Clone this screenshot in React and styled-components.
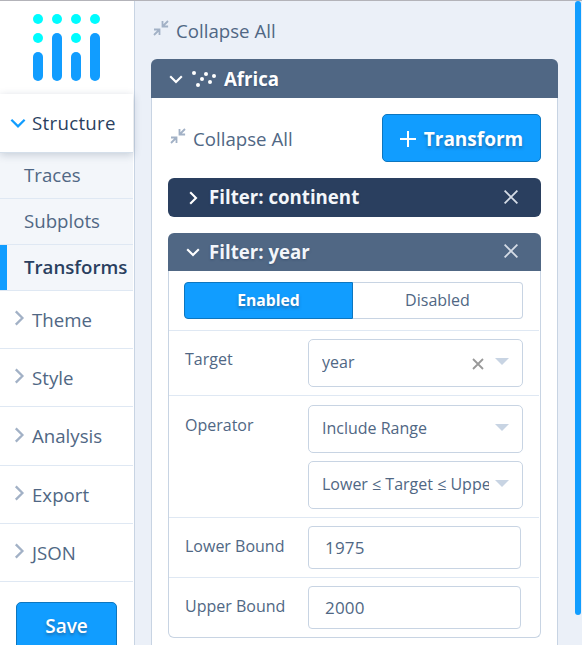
import React from "react";
import styled, { createGlobalStyle, css } from "styled-components";

const Global = createGlobalStyle`
  * { box-sizing: border-box; }
  html, body { margin: 0; background: #fff; overflow: hidden; }
  body { font-family: "Open Sans", sans-serif; color: #506784; }
`;

const Editor = styled.div`
  width: 582px;
  height: 645px;
  display: flex;
  overflow: hidden;
  border-top: 1px solid #b3b3b9;
  background: #ebf0f8;
`;

const Sidebar = styled.nav`
  width: 135px;
  flex: none;
  background: #fff;
  border-right: 1px solid #c8d4e3;
  padding-right: 1px;
`;

const LogoBox = styled.div`
  height: 93px;
  padding: 13px 0 0 33px;
  svg { display: block; }
`;

const Group = styled.div`
  display: flex;
  align-items: center;
  height: ${(p) => p.$height || 58}px;
  padding-left: ${(p) => (p.$open ? 10 : 10.5)}px;
  border-bottom: 1px solid #dfe8f3;
  font-size: 18.67px;
  line-height: 24px;
  color: ${(p) => (p.$open ? "#2a3f5f" : "#506784")};
  ${(p) => p.$open && css`
    position: relative;
    font-weight: 500;
    letter-spacing: 0.3px;
    padding-bottom: 1px;
    border-bottom-color: #d5dfea;
    box-shadow: 0 2px 8px rgba(42, 63, 95, 0.22);
  `}
  svg {
    flex: none;
    margin-right: ${(p) => (p.$open ? 6 : 5.5)}px;
    margin-bottom: ${(p) => (p.$open ? 0 : 3)}px;
  }
`;

const SubItem = styled.div`
  height: 46px;
  padding: 10px 0 0 24px;
  border-bottom: 1px solid #dfe8f3;
  background: #f3f6fa;
  font-size: 18.67px;
  line-height: 24px;
  white-space: nowrap;
  ${(p) => p.$active && css`
    color: #2a3f5f;
    font-weight: 600;
    box-shadow: inset 7px 0 #119dff;
  `}
`;

const Button = styled.button`
  display: flex;
  align-items: center;
  justify-content: center;
  gap: 8px;
  width: ${(p) => p.$width}px;
  height: 48px;
  padding: ${(p) => p.$shift || 0}px 0 0;
  border: 1px solid #0d76bf;
  border-radius: 5px;
  background: #119dff;
  color: #fff;
  font: 600 19px/24px "Open Sans", sans-serif;
  font-weight: ${(p) => p.$weight || 600};
  text-shadow: 0 2px 3px rgba(42, 63, 95, 0.5);
`;

const SaveArea = styled.div`
  padding: 20px 0 0 16px;
`;

const Main = styled.main`
  width: 440px;
  flex: none;
  padding: 0 24px 0 16px;
`;

const CollapseAll = styled.div`
  display: flex;
  align-items: center;
  font-size: 18.67px;
  line-height: 24px;
  svg { margin: -6px 7px 0 0; }
`;

const TopActions = styled.div`
  height: 58px;
  padding: 18px 0 0 2px;
`;

const Fold = styled.section`
  width: ${(p) => p.$width}px;
  margin-bottom: 16px;
`;

const FoldHeader = styled.header`
  display: flex;
  align-items: center;
  height: ${(p) => p.$height || 39}px;
  padding: 0 23px 0 18px;
  border-radius: ${(p) => (p.$folded ? "6px" : "6px 6px 0 0")};
  background: ${(p) => (p.$folded ? "#2a3f5f" : "#506784")};
  color: ${(p) => (p.$soft ? "#f3f6fa" : "#fff")};
  font-size: 18.67px;
  line-height: 24px;
  font-weight: 700;
  text-shadow: 0 1px 2px rgba(42, 63, 95, 0.5);
`;

const FoldTitle = styled.span`
  flex: 1;
  margin-left: ${(p) => p.$gap}px;
  padding-bottom: ${(p) => p.$lift || 0}px;
`;

const FoldIcon = styled.span`
  display: flex;
  flex: none;
  margin-left: 9px;
`;

const CloseButton = styled.span`
  display: flex;
  padding-bottom: 2px;
`;

const TraceBody = styled.div`
  height: 600px;
  padding: 16px 16px 0;
  border: solid #c8d4e3;
  border-width: 0 1px;
  background: #fff;
`;

const TraceActions = styled.div`
  display: flex;
  align-items: center;
  justify-content: space-between;
  height: 48px;
  margin-bottom: 16px;
  padding-left: 2px;
  ${CollapseAll} { padding-top: 2px; }
`;

const FilterBody = styled.div`
  height: 367px;
  border: 1px solid #c8d4e3;
  border-top: 0;
  border-radius: 0 0 6px 6px;
  padding-right: 1px;
`;

const Field = styled.div`
  display: flex;
  height: ${(p) => p.$height}px;
  padding: ${(p) => p.$top}px 0 0 ${(p) => p.$left || 16}px;
  border-bottom: ${(p) => (p.$last ? "0" : "1px solid #dfe8f3")};
`;

const Label = styled.label`
  width: 123px;
  flex: none;
  padding-top: 9px;
  font-size: 16px;
  line-height: 22px;
`;

const Controls = styled.div`
  display: flex;
  flex-direction: column;
  gap: 8px;
`;

const Toggle = styled.div`
  display: flex;
`;

const ToggleOption = styled.button`
  width: ${(p) => (p.$active ? 169 : 170)}px;
  height: 37px;
  padding: 0 0 2px;
  font: 400 16px/22px "Open Sans", sans-serif;
  color: #506784;
  background: #fff;
  border: 1px solid #c8d4e3;
  border-left: 0;
  border-radius: 0 4px 4px 0;
  ${(p) => p.$active && css`
    color: #fff;
    background: #119dff;
    font-weight: 700;
    font-size: 15.7px;
    border: 1px solid #0d76bf;
    border-radius: 4px 0 0 4px;
    text-shadow: 0 2px 3px rgba(42, 63, 95, 0.5);
  `}
`;

const SelectBox = styled.div`
  display: flex;
  align-items: center;
  width: 215px;
  height: 48px;
  padding: 0 13px 2px;
  border: 1px solid #c8d4e3;
  border-radius: 5px;
  font-size: 16px;
  line-height: 24px;
`;

const SelectValue = styled.span`
  flex: 1;
  min-width: 0;
  overflow: hidden;
  white-space: nowrap;
`;

const Caret = styled.span`
  flex: none;
  margin: 0 0 1px 6px;
  border: 7px solid transparent;
  border-top-color: #c8d4e3;
  border-bottom: 0;
`;

const NumberInput = styled.input`
  width: 213px;
  height: 43px;
  padding: 0 16px;
  border: 1px solid #c8d4e3;
  border-radius: 4px;
  background: #fff;
  color: #506784;
  font: 400 17px/24px "Open Sans", sans-serif;
  letter-spacing: 0.2px;
`;

const Scrollbar = styled.div`
  width: 6px;
  height: 614px;
  flex: none;
  border-radius: 3px;
  background: #119dff;
`;

const Logo = () => (
  <svg width="68" height="68" viewBox="0 0 68 68">
    <g fill="#00fcff">
      {[5, 24, 43, 62].map((x) => <circle key={x} cx={x} cy="5" r="5" />)}
      <circle cx="5" cy="24" r="5" />
      <circle cx="43" cy="24" r="5" />
    </g>
    <g fill="#119dff">
      <rect x="0" y="38" width="10" height="29" rx="5" />
      <rect x="19" y="19" width="10" height="48" rx="5" />
      <rect x="38" y="38" width="10" height="29" rx="5" />
      <rect x="57" y="19" width="10" height="48" rx="5" />
    </g>
  </svg>
);

const ChevronDown = ({ size = 14, color = "#fff", weight = 2 }) => (
  <svg width={size} height={size} viewBox="0 0 14 14" fill="none" stroke={color} strokeWidth={weight}>
    <path d="M1.2 4.2 7 10l5.8-5.8" />
  </svg>
);

const ChevronRight = ({ size = 14, color = "#fff", weight = 2 }) => (
  <svg width={size} height={size} viewBox="0 0 14 14" fill="none" stroke={color} strokeWidth={weight}>
    <path d="M4.2 1.2 10 7l-5.8 5.8" />
  </svg>
);

const CollapseIcon = () => (
  <svg width="16" height="16" viewBox="0 0 16 16" fill="none" stroke="#a2b1c6" strokeWidth="1.8">
    <path d="M9.5 1v5.5h5.6M9.5 6.5 15 1M1 9.5h5.5v5.6M6.5 9.5 1 15" />
  </svg>
);

const ScatterIcon = () => (
  <svg width="24" height="17" viewBox="0 0 24 17" fill="#fff">
    <circle cx="2" cy="3" r="2" />
    <circle cx="6" cy="15" r="2" />
    <circle cx="10" cy="9" r="2" />
    <circle cx="14" cy="4" r="2" />
    <circle cx="18" cy="12" r="2" />
    <circle cx="22" cy="6" r="2" />
  </svg>
);

const CloseIcon = () => (
  <svg width="14" height="14" viewBox="0 0 14 14" stroke="#d5dce6" strokeWidth="1.8">
    <path d="m.6.6 12.8 12.8M13.4.6.6 13.4" />
  </svg>
);

const ClearIcon = () => (
  <svg width="12" height="12" viewBox="0 0 12 12" stroke="#999" strokeWidth="1.8">
    <path d="m1 1 10 10M11 1 1 11" />
  </svg>
);

const ClearSlot = styled.span`
  display: flex;
  margin: 3px 5px 0 0;
`;

const PlusIcon = () => (
  <svg width="16" height="16" viewBox="0 0 16 16" stroke="#fff" strokeWidth="2">
    <path d="M8 0v16M0 8h16" />
  </svg>
);

const Select = ({ value, clearable }) => (
  <SelectBox>
    <SelectValue>{value}</SelectValue>
    {clearable && <ClearSlot><ClearIcon /></ClearSlot>}
    <Caret />
  </SelectBox>
);

const groups = [["Theme", 58], ["Style", 58], ["Analysis", 59], ["Export", 58], ["JSON", 58]];

export default function App() {
  return (
    <>
      <Global />
      <Editor>
        <Sidebar>
          <LogoBox><Logo /></LogoBox>
          <Group $open $height={59}>
            <ChevronDown size={16} color="#119dff" weight={2} />
            Structure
          </Group>
          <SubItem>Traces</SubItem>
          <SubItem>Subplots</SubItem>
          <SubItem $active>Transforms</SubItem>
          {groups.map(([name, height]) => (
            <Group key={name} $height={height}>
              <ChevronRight size={16} color="#a2b1c6" weight={2} />
              {name}
            </Group>
          ))}
          <SaveArea><Button $width={101}>Save</Button></SaveArea>
        </Sidebar>
        <Main>
          <TopActions>
            <CollapseAll><CollapseIcon />Collapse All</CollapseAll>
          </TopActions>
          <Fold $width={407}>
            <FoldHeader>
              <ChevronDown weight={2.1} />
              <FoldIcon><ScatterIcon /></FoldIcon>
              <FoldTitle $gap={8}>Africa</FoldTitle>
            </FoldHeader>
            <TraceBody>
              <TraceActions>
                <CollapseAll><CollapseIcon />Collapse All</CollapseAll>
                <Button $width={159} $weight={700} $shift={2}><PlusIcon />Transform</Button>
              </TraceActions>
              <Fold $width={373}>
                <FoldHeader $folded $soft>
                  <ChevronRight weight={2.1} />
                  <FoldTitle $gap={9} $lift={1}>Filter: continent</FoldTitle>
                  <CloseButton><CloseIcon /></CloseButton>
                </FoldHeader>
              </Fold>
              <Fold $width={373}>
                <FoldHeader $soft $height={38}>
                  <ChevronDown weight={2.1} />
                  <FoldTitle $gap={9} $lift={1}>Filter: year</FoldTitle>
                  <CloseButton><CloseIcon /></CloseButton>
                </FoldHeader>
                <FilterBody>
                  <Field $height={60} $top={11} $left={15}>
                    <Toggle>
                      <ToggleOption $active>Enabled</ToggleOption>
                      <ToggleOption>Disabled</ToggleOption>
                    </Toggle>
                  </Field>
                  <Field $height={65} $top={8}>
                    <Label>Target</Label>
                    <Select value="year" clearable />
                  </Field>
                  <Field $height={122} $top={9}>
                    <Label>Operator</Label>
                    <Controls>
                      <Select value="Include Range" />
                      <Select value="Lower ≤ Target ≤ Upper" />
                    </Controls>
                  </Field>
                  <Field $height={60} $top={8}>
                    <Label>Lower Bound</Label>
                    <NumberInput defaultValue="1975" />
                  </Field>
                  <Field $height={60} $top={8} $last>
                    <Label>Upper Bound</Label>
                    <NumberInput defaultValue="2000" />
                  </Field>
                </FilterBody>
              </Fold>
            </TraceBody>
          </Fold>
        </Main>
        <Scrollbar />
      </Editor>
    </>
  );
}
